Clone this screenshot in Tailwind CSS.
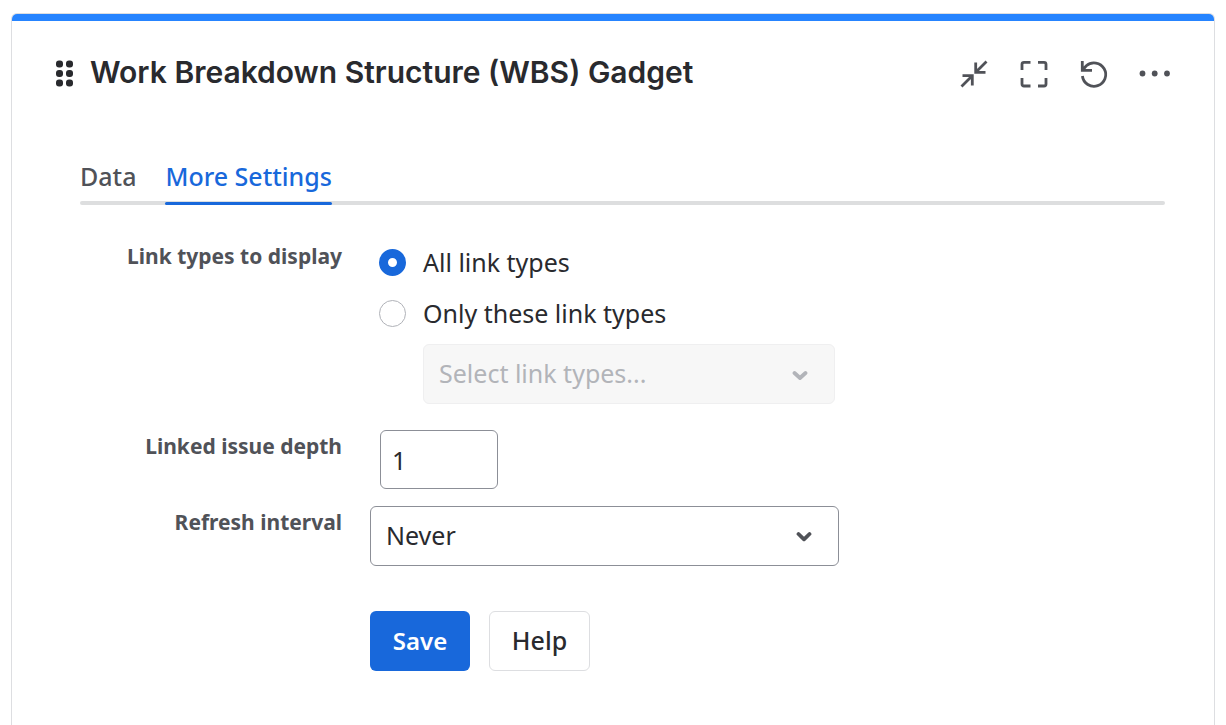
<!DOCTYPE html>
<html lang="en">
<head>
<meta charset="utf-8">
<meta name="viewport" content="width=device-width, initial-scale=1">
<title>Work Breakdown Structure (WBS) Gadget</title>
<script src="https://cdn.jsdelivr.net/npm/@tailwindcss/browser@4"></script>
</head>
<body class="flex min-h-screen flex-col bg-white px-[11px] pt-[13px] font-['Noto_Sans','Open_Sans',sans-serif] text-[25px] text-[#292a2e]">
<main class="grow rounded-t-md border border-b-0 border-[#dddee1]">
  <div class="h-[7px] rounded-t-[5px] bg-[#2684ff]"></div>
  <header class="flex items-center justify-between pt-8 pr-10 pl-11">
    <div class="flex items-center gap-4">
      <svg class="h-7 w-[18px] shrink-0" viewBox="0 0 18 28" fill="#292a2e" aria-hidden="true">
        <rect x="0" y="0.500" width="7" height="7" rx="3"/><rect x="10" y="0.500" width="7" height="7" rx="3"/>
        <rect x="0" y="10" width="7" height="7" rx="3"/><rect x="10" y="10" width="7" height="7" rx="3"/>
        <rect x="0" y="19.500" width="7" height="7" rx="3"/><rect x="10" y="19.500" width="7" height="7" rx="3"/>
      </svg>
      <h1 class="pb-1 font-[Inter,sans-serif] text-[30px] leading-[38px] font-semibold">Work Breakdown Structure (WBS) Gadget</h1>
    </div>
    <div class="flex items-center gap-7 text-[#505258]">
      <button type="button" aria-label="Minimize"><svg class="size-8" viewBox="0 0 32 32" fill="none" stroke="currentColor" stroke-width="2.8"><path d="M28.500 3.500 L18.500 13.500 M17.700 4.500 V14.300 H27.500 M3.500 28.500 L13.500 18.500 M4.500 17.700 H14.300 V27.500"/></svg></button>
      <button type="button" aria-label="Full screen"><svg class="size-8" viewBox="0 0 32 32" fill="none" stroke="currentColor" stroke-width="2.8"><path d="M4 12 V6.300 Q4 4.300 6 4.300 H12.500 M20 4.300 H26 Q28 4.300 28 6.300 V12 M28 20 V26 Q28 28 26 28 H20 M12.500 28 H6 Q4 28 4 26 V20"/></svg></button>
      <button type="button" aria-label="Refresh"><svg class="size-8" viewBox="0 0 32 32" fill="none" stroke="currentColor" stroke-width="2.800"><path d="M4.300 3 V12.300 H14 M4.600 12 L8.300 7.800 A11.700 11.700 0 1 1 4.400 18"/></svg></button>
      <button type="button" aria-label="More actions"><svg class="h-8 w-9" viewBox="0 0 36 32" fill="currentColor"><circle cx="4.500" cy="15.500" r="2.900"/><circle cx="16.700" cy="15.500" r="2.900"/><circle cx="29" cy="15.500" r="2.900"/></svg></button>
    </div>
  </header>

  <div class="pr-[49px] pl-[68px]">
    <nav class="relative mt-[63px] flex gap-[29px] pb-1 leading-9 font-medium">
      <span class="absolute inset-x-0 bottom-0 h-1 rounded-full bg-[#dddedf]"></span>
      <a href="#data" class="pb-[7px] text-[#505258]">Data</a>
      <a href="#more" aria-current="page" class="relative pb-[7px] text-[#1868db]">More Settings<span class="absolute inset-x-0 -bottom-1 h-[3px] rounded-full bg-[#1868db]"></span></a>
    </nav>

    <form class="pt-[35px]">
      <div role="group" aria-labelledby="types" class="flex gap-7">
        <span id="types" class="w-[262px] shrink-0 text-right text-[21px] leading-8 font-bold text-[#505258]">Link types to display</span>
        <div class="max-w-[469px] grow pt-1 pr-1 pl-[9px]">
          <label class="flex items-center gap-[17px] leading-9"><input type="radio" name="links" checked class="size-[27px] appearance-none rounded-full border border-[#b0b2b8] bg-white checked:border-[9px] checked:border-[#1868db]">All link types</label>
          <label class="mt-[15px] flex items-center gap-[17px] leading-9"><input type="radio" name="links" class="size-[27px] appearance-none rounded-full border border-[#b0b2b8] bg-white checked:border-[9px] checked:border-[#1868db]">Only these link types</label>
          <div class="relative mt-[13px] ml-11">
            <select disabled aria-label="Link types" class="h-[60px] w-full appearance-none rounded-md border border-[#efeff0] bg-[#f7f7f7] px-[15px] text-[#b2b4b9] opacity-100"><option>Select link types...</option></select>
            <svg class="pointer-events-none absolute top-[22px] right-[27px] size-4 text-[#b2b4b9]" viewBox="0 0 16 16" fill="none" stroke="currentColor" stroke-width="3.800" stroke-linecap="round" stroke-linejoin="round" aria-hidden="true"><path d="M2.500 7 L8 12 L13.500 7"/></svg>
          </div>
        </div>
      </div>
      <div class="mt-[26px] flex gap-7">
        <label for="depth" class="w-[262px] shrink-0 text-right text-[21px] leading-8 font-bold text-[#505258]">Linked issue depth</label>
        <div class="flex pl-[10px]"><input id="depth" type="text" inputmode="numeric" value="1" class="h-[59px] w-[118px] rounded-md border border-[#8c8f97] px-[11px]"></div>
      </div>
      <div class="mt-[17px] flex gap-7">
        <label for="interval" class="w-[262px] shrink-0 text-right text-[21px] leading-8 font-bold text-[#505258]">Refresh interval</label>
        <div class="relative max-w-[469px] grow">
          <select id="interval" class="h-[60px] w-full appearance-none rounded-md border border-[#8c8f97] bg-white px-[15px]"><option>Never</option></select>
          <svg class="pointer-events-none absolute top-[22px] right-[27px] size-4 text-[#505258]" viewBox="0 0 16 16" fill="none" stroke="currentColor" stroke-width="3.800" stroke-linecap="round" stroke-linejoin="round" aria-hidden="true"><path d="M2.500 6 L8 11.300 L13.500 6"/></svg>
        </div>
      </div>
      <div class="mt-[45px] ml-[290px] flex gap-[19px]">
        <button type="submit" class="h-[60px] w-[100px] rounded-md bg-[#1868db] text-2xl font-semibold text-white">Save</button>
        <button type="button" class="h-[60px] w-[101px] rounded-md border border-[#dddee1] bg-white font-medium">Help</button>
      </div>
    </form>
  </div>
</main>
</body>
</html>
